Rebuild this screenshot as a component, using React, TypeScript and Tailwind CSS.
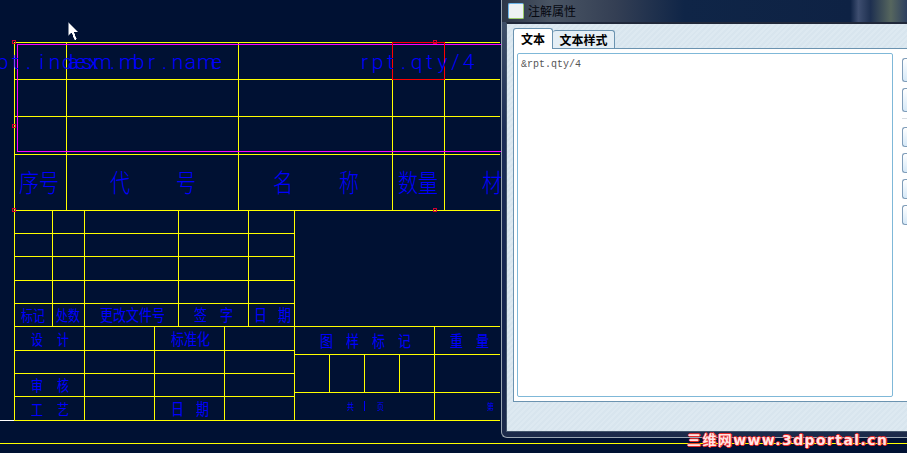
const hLines: [number, number, number][] = [
  [14, 500, 42],
  [14, 500, 79],
  [14, 500, 116],
  [14, 500, 154],
  [14, 500, 210],
  [14, 294, 233],
  [14, 294, 256],
  [14, 294, 280],
  [14, 294, 303],
  [14, 500, 326],
  [14, 294, 350],
  [294, 500, 354],
  [14, 294, 373],
  [294, 500, 392],
  [14, 294, 396],
  [14, 500, 420],
  [0, 907, 443],
];

const vLines: [number, number, number][] = [
  [14, 42, 420],
  [66, 42, 210],
  [238, 42, 210],
  [392, 42, 210],
  [444, 42, 210],
  [52, 210, 326],
  [84, 210, 420],
  [178, 210, 326],
  [248, 210, 326],
  [294, 210, 420],
  [154, 326, 420],
  [224, 326, 420],
  [329, 354, 392],
  [364, 354, 392],
  [399, 354, 392],
  [434, 326, 420],
];

const handles: [number, number][] = [
  [14, 42],
  [14, 126],
  [14, 210],
  [435, 42],
  [435, 210],
];

const latinLabels = [
  { text: "rpt.index", x: -17 },
  { text: "asm.mbr.name", x: 67 },
  { text: "rpt.qty/4", x: 358 },
];

const bigLabels = [
  { text: "序号", x: 19 },
  { text: "代", x: 110 },
  { text: "号", x: 176 },
  { text: "名", x: 273 },
  { text: "称", x: 339 },
  { text: "数量", x: 398 },
  { text: "材", x: 482 },
];

const smallLabels = [
  { text: "标记", x: 21, y: 306, size: 12 },
  { text: "处数", x: 56, y: 306, size: 12 },
  { text: "更改文件号", x: 100, y: 306, size: 13 },
  { text: "签", x: 194, y: 306, size: 13 },
  { text: "字", x: 220, y: 306, size: 13 },
  { text: "日", x: 254, y: 306, size: 13 },
  { text: "期", x: 278, y: 306, size: 13 },
  { text: "设", x: 31, y: 330, size: 12 },
  { text: "计", x: 57, y: 330, size: 12 },
  { text: "标准化", x: 171, y: 330, size: 13 },
  { text: "审", x: 31, y: 376, size: 12 },
  { text: "核", x: 57, y: 376, size: 12 },
  { text: "工", x: 31, y: 400, size: 12 },
  { text: "艺", x: 57, y: 400, size: 12 },
  { text: "日", x: 171, y: 400, size: 13 },
  { text: "期", x: 196, y: 400, size: 13 },
  { text: "图", x: 320, y: 332, size: 13 },
  { text: "样", x: 346, y: 332, size: 13 },
  { text: "标", x: 372, y: 332, size: 13 },
  { text: "记", x: 398, y: 332, size: 13 },
  { text: "重", x: 450, y: 332, size: 13 },
  { text: "量", x: 476, y: 332, size: 13 },
  { text: "共", x: 347, y: 398, size: 7 },
  { text: "页", x: 377, y: 398, size: 7 },
  { text: "第", x: 487, y: 398, size: 7 },
];

function DrawingCanvas() {
  return (
    <div className="absolute inset-0 overflow-hidden bg-[#001133]">
      <svg width="907" height="453" className="absolute left-0 top-0" shapeRendering="crispEdges">
        {hLines.map(([x1, x2, y], i) => (
          <line key={i} x1={x1} x2={x2} y1={y + 0.5} y2={y + 0.5} stroke="#ffff00" />
        ))}
        {vLines.map(([x, y1, y2], i) => (
          <line key={i} x1={x + 0.5} x2={x + 0.5} y1={y1} y2={y2} stroke="#ffff00" />
        ))}
        <line x1="0" x2="14" y1="420.5" y2="420.5" stroke="#ffffff" />
        <line x1="364.5" x2="364.5" y1="401" y2="411" stroke="#0000ff" />
        {/* selected note frame */}
        <rect x="17.5" y="44" width="500" height="107.5" fill="none" stroke="#ff00ff" />
        <line x1="17" x2="500" y1="44.5" y2="44.5" stroke="#ff00ff" />
        <rect x="392.5" y="42.5" width="52" height="37" fill="none" stroke="#ff0000" />
        {handles.map(([x, y], i) => (
          <rect key={i} x={x - 1.5} y={y - 1.5} width="3" height="3" fill="none" stroke="#d00030" />
        ))}
        {/* mouse pointer */}
        <path
          d="M68 21.5 V36 L71.5 33 L74.5 40 L77 39 L74 32 L78.5 32 Z"
          fill="#ffffff"
          stroke="#001133"
          strokeWidth="0.5"
        />
      </svg>

      {latinLabels.map((l) => (
        <span
          key={l.text}
          className="absolute top-[49px] flex whitespace-nowrap font-['Roboto',sans-serif] text-[21px] leading-[26px] font-light text-[#0000ff]"
          style={{ left: l.x }}
        >
          {l.text.split("").map((ch, i) => (
            <span key={i} className="w-[13px] text-center">
              {ch}
            </span>
          ))}
        </span>
      ))}
      {bigLabels.map((l) => (
        <span
          key={l.text + l.x}
          className="absolute top-[167px] scale-y-125 whitespace-nowrap font-['Noto_Sans_CJK_SC',sans-serif] text-[20px] leading-[30px] font-light text-[#0000ff]"
          style={{ left: l.x }}
        >
          {l.text}
        </span>
      ))}
      {smallLabels.map((l) => (
        <span
          key={l.text + l.x + l.y}
          className="absolute scale-y-125 whitespace-nowrap font-['Noto_Sans_CJK_SC',sans-serif] leading-[17px] text-[#0000ff]"
          style={{ left: l.x, top: l.y, fontSize: l.size }}
        >
          {l.text}
        </span>
      ))}
    </div>
  );
}

function SideButton({ h }: { h: string }) {
  return <div className={`${h} w-[12px] flex-none rounded-l-[3px] border border-r-0 border-[#7f9db9] bg-gradient-to-b from-white to-[#d6e9f8]`} />;
}

function Dialog() {
  return (
    <div className="absolute bottom-[15px] left-[501px] right-0 top-0 flex flex-col overflow-hidden rounded-bl-[6px] border-b border-l border-[#9aa6b2] bg-[linear-gradient(180deg,#46566c_0,#1a2c56_30%,#14244e_80%,#1c2a4a_100%)] pb-[5px] pl-[4px]">
      <div className="-ml-[4px] flex h-[22px] flex-none items-center gap-[4px] bg-[linear-gradient(90deg,#2c3648_0,#4a5564_12%,#343f54_28%,#0f2547_45%,#0e2244_86%,#3e4e70_88%,#1e3050_91%,#56665e_96%,#2e4060_100%)] pl-[6px]">
        <div className="h-[16px] w-[16px] rounded-[2px] border border-[#6db6ea] border-b-[#9ccc6a] border-r-[#9ccc6a] bg-[#eef2f4]" />
        <span className="font-['Noto_Sans_CJK_SC',sans-serif] text-[12px] leading-none text-[#05070f]">注解属性</span>
      </div>
      <div className="flex min-h-0 flex-1 flex-col border-b border-l border-t-2 border-b-[#44566c] border-l-[#44566c] border-t-[#20283a] bg-[repeating-linear-gradient(135deg,#dde9f1_0,#dde9f1_2px,#d8e5ee_2px,#d8e5ee_4px)] pl-[6px] pt-[4px]">
        <div className="flex h-[20px] flex-none items-end font-['Noto_Sans_CJK_SC',sans-serif] text-[12px] font-bold leading-none text-black">
          <div className="relative z-10 flex h-[21px] w-[40px] translate-y-px items-center justify-center rounded-t-[3px] border border-b-0 border-[#6b93b0] bg-white">
            文本
          </div>
          <div className="flex h-[18px] w-[62px] items-center justify-center rounded-t-[3px] border border-b-0 border-l-0 border-[#6b93b0] bg-[#e4eef5]">
            文本样式
          </div>
        </div>
        <div className="flex h-[354px] flex-none border-y border-l border-[#6b93b0] bg-white pb-[4px] pl-[3px] pt-[4px]">
          <div className="h-full w-[376px] flex-none rounded-[2px] border border-[#7fb8d8] px-[3px] py-[5px] font-['Liberation_Mono',monospace] text-[10px] leading-[12px] text-[#555]">
            &amp;rpt.qty/4
          </div>
          <div className="ml-[9px] flex flex-col items-start gap-[6px] pt-[5px]">
            <SideButton h="h-[24px]" />
            <SideButton h="h-[24px]" />
            <div className="mb-[2px] h-px w-[8px] flex-none bg-[#d8dde2]" />
            <SideButton h="h-[20px]" />
            <SideButton h="h-[20px]" />
            <SideButton h="h-[20px]" />
            <SideButton h="h-[20px]" />
          </div>
        </div>
      </div>
    </div>
  );
}

export default function App() {
  return (
    <div className="relative h-[453px] w-[907px] overflow-hidden">
      <DrawingCanvas />
      <Dialog />
      <span className="absolute left-[687px] top-[431px] whitespace-nowrap font-['DejaVu_Sans','Noto_Sans_CJK_SC',sans-serif] text-[14px] font-bold leading-[18px] tracking-[1.4px] text-[#ffe4e4] [text-shadow:1px_0_#e62828,-1px_0_#e62828,0_1px_#e62828,0_-1px_#e62828]">
        三维网www.3dportal.cn
      </span>
    </div>
  );
}
